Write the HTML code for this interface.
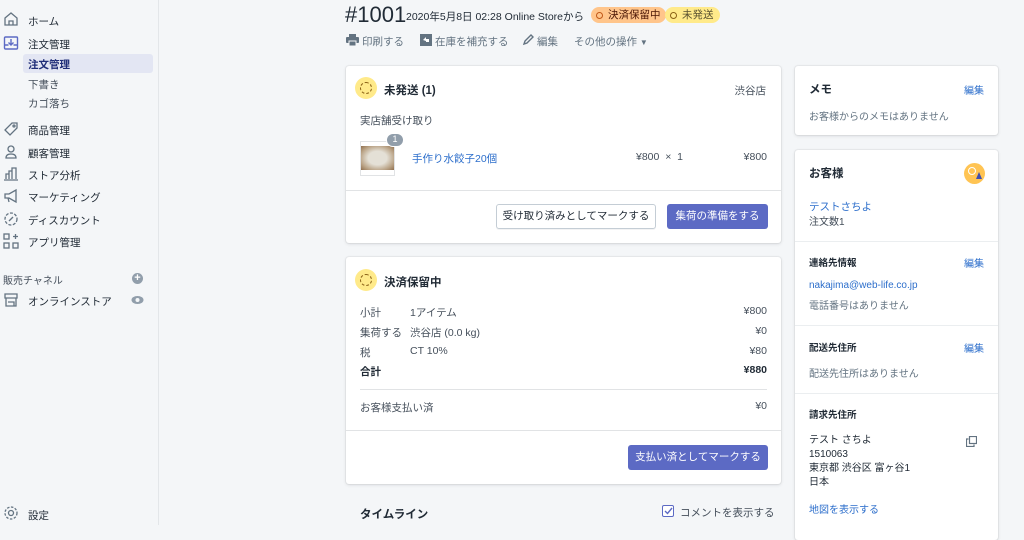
<!DOCTYPE html>
<html><head><meta charset="utf-8"><style>
*{margin:0;padding:0;box-sizing:border-box}
body{width:1024px;height:525px;overflow:hidden;background:#f4f6f8;font-family:"Liberation Sans","Noto Sans CJK JP",sans-serif;color:#212b36;position:relative;font-size:10px}
.a{position:absolute;white-space:nowrap}
.side{position:absolute;left:0;top:0;width:159px;height:525px;background:#f4f6f8;border-right:1px solid #e3e6e9}
.nav{position:absolute;left:28px;font-size:10.5px;color:#212b36}
.ic{position:absolute;left:3px}
.card{position:absolute;background:#fff;border-radius:3px;box-shadow:0 0 0 1px rgba(63,63,68,.05),0 1px 3px rgba(63,63,68,.15)}
.grey{color:#637381}
.blue{color:#2c6ecb}
.btn{position:absolute;border-radius:3px;font-size:10.5px;text-align:center}
.hr{position:absolute;height:1px;background:#e1e3e5}
</style></head><body>
<div class="side">
<svg class="ic" style="top:11px" width="16" height="16" viewBox="0 0 16 16" fill="none" stroke="#637381" stroke-width="1.3"><path d="M2 7L8 2l6 5v7H2z"/><path d="M6 14V10h4v4"/></svg>
<div class="nav" style="top:14px">ホーム</div>
<svg class="ic" style="top:35px" width="16" height="16" viewBox="0 0 16 16" fill="none" stroke="#5c6ac4" stroke-width="1.4"><rect x="1.5" y="2" width="13" height="12" rx="1"/><path d="M8 4v6M5.5 7.5L8 10l2.5-2.5M1.5 10h4M10.5 10h4"/></svg>
<div class="nav" style="top:37px">注文管理</div>
<div class="a" style="left:23px;top:54px;width:130px;height:19px;background:#e3e6f3;border-radius:3px"></div>
<div class="nav" style="top:57px;font-weight:bold;color:#202e78">注文管理</div>
<div class="nav" style="top:77px;color:#454f5b">下書き</div>
<div class="nav" style="top:96px;color:#454f5b">カゴ落ち</div>
<svg class="ic" style="top:121px" width="16" height="16" viewBox="0 0 16 16" fill="none" stroke="#637381" stroke-width="1.3"><path d="M9 2h5v5l-7 7-5-5z"/><circle cx="11" cy="5" r="1"/></svg>
<div class="nav" style="top:123px">商品管理</div>
<svg class="ic" style="top:144px" width="16" height="16" viewBox="0 0 16 16" fill="none" stroke="#637381" stroke-width="1.3"><circle cx="8" cy="5" r="3"/><path d="M3 14c0-3 2-4 5-4s5 1 5 4z"/></svg>
<div class="nav" style="top:146px">顧客管理</div>
<svg class="ic" style="top:166px" width="16" height="16" viewBox="0 0 16 16" fill="none" stroke="#637381" stroke-width="1.3"><path d="M1 14h14M3 13V8h3v5M6 13V5h3v8M9 13V2h4v11"/></svg>
<div class="nav" style="top:168px">ストア分析</div>
<svg class="ic" style="top:188px" width="16" height="16" viewBox="0 0 16 16" fill="none" stroke="#637381" stroke-width="1.3"><path d="M2 6h4l7-4v12l-7-4H2zM5 10l1 4"/></svg>
<div class="nav" style="top:190px">マーケティング</div>
<svg class="ic" style="top:211px" width="16" height="16" viewBox="0 0 16 16" fill="none" stroke="#637381" stroke-width="1.3"><circle cx="8" cy="8" r="6" stroke-dasharray="3 1.5"/><path d="M6 10l4-4"/></svg>
<div class="nav" style="top:213px">ディスカウント</div>
<svg class="ic" style="top:233px" width="16" height="16" viewBox="0 0 16 16" fill="none" stroke="#637381" stroke-width="1.3"><rect x="1" y="1" width="5" height="5"/><rect x="1" y="10" width="5" height="5"/><rect x="10" y="10" width="5" height="5"/><path d="M12.5 1v5M10 3.5h5"/></svg>
<div class="nav" style="top:235px">アプリ管理</div>
<div class="a" style="left:3px;top:272px;font-size:10px;color:#454f5b">販売チャネル</div>
<div class="a" style="left:132px;top:273px;width:11px;height:11px;border-radius:50%;background:#919eab;color:#fff;font-size:11px;line-height:11px;text-align:center;font-weight:bold">+</div>
<svg class="ic" style="top:292px" width="16" height="16" viewBox="0 0 16 16" fill="none" stroke="#637381" stroke-width="1.3"><path d="M2 2h12v4H2zM3 6v8h10V6M5 10h6v4"/></svg>
<div class="nav" style="top:294px">オンラインストア</div>
<svg class="a" style="left:131px;top:295px" width="13" height="10" viewBox="0 0 13 10"><ellipse cx="6.5" cy="5" rx="6" ry="4" fill="#919eab"/><circle cx="6.5" cy="5" r="2" fill="#f4f6f8"/></svg>
<svg class="ic" style="top:505px" width="16" height="16" viewBox="0 0 16 16" fill="none" stroke="#637381" stroke-width="1.3"><circle cx="8" cy="8" r="2.5"/><circle cx="8" cy="8" r="6" stroke-dasharray="2.5 1.5"/></svg>
<div class="nav" style="top:508px">設定</div>
</div>

<div class="a" style="left:345px;top:2px;font-size:22px;color:#212b36">#1001</div>
<div class="a" style="left:406px;top:9px;font-size:10.5px">2020年5月8日 02:28 Online Storeから</div>
<div class="a" style="left:591px;top:7px;height:16px;padding:0 5px 0 17px;background:#ffc58b;border-radius:8px;font-size:10.5px;line-height:16px;color:#4a1504">決済保留中</div>
<div class="a" style="left:596px;top:12px;width:7px;height:7px;border-radius:50%;border:1.5px solid #c05717"></div>
<div class="a" style="left:665px;top:7px;height:16px;padding:0 6px 0 17px;background:#ffea8a;border-radius:8px;font-size:10.5px;line-height:16px;color:#595130">未発送</div>
<div class="a" style="left:670px;top:12px;width:7px;height:7px;border-radius:50%;border:1.5px solid #8a6116"></div>

<svg class="a" style="left:346px;top:34px" width="13" height="12" viewBox="0 0 13 12" fill="#637381"><rect x="3" y="0" width="7" height="3"/><rect x="0" y="3" width="13" height="6" rx="1"/><rect x="3" y="7" width="7" height="5" fill="#637381" stroke="#f4f6f8"/></svg>
<div class="a grey" style="left:362px;top:34px;font-size:10.5px">印刷する</div>
<svg class="a" style="left:420px;top:34px" width="12" height="12" viewBox="0 0 12 12"><rect width="12" height="12" fill="#637381"/><path d="M3 6l3-3v2h3v3H6v-1z" fill="#fff"/></svg>
<div class="a grey" style="left:435px;top:34px;font-size:10.5px">在庫を補充する</div>
<svg class="a" style="left:522px;top:33px" width="13" height="13" viewBox="0 0 13 13" fill="none" stroke="#637381" stroke-width="1.4"><path d="M2 11l1-3 6-6 2 2-6 6z"/></svg>
<div class="a grey" style="left:537px;top:34px;font-size:10.5px">編集</div>
<div class="a grey" style="left:574px;top:34px;font-size:10.5px">その他の操作 <span style="font-size:8px">▼</span></div>

<!-- card 1 -->
<div class="card" style="left:346px;top:66px;width:435px;height:177px">
<div class="a" style="left:9px;top:11px;width:22px;height:22px;border-radius:50%;background:#ffea8a"></div>
<div class="a" style="left:14px;top:16px;width:12px;height:12px;border-radius:50%;border:1.5px dashed #8a6116"></div>
<div class="a" style="left:38px;top:16px;font-size:11.5px;font-weight:bold">未発送 (1)</div>
<div class="a" style="right:15px;top:17px;font-size:10.5px;color:#454f5b">渋谷店</div>
<div class="a" style="left:14px;top:47px;font-size:10.5px;color:#454f5b">実店舗受け取り</div>
<div class="a" style="left:14px;top:75px;width:35px;height:35px;background:#fff;border:1px solid #e1e3e5"></div>
<div class="a" style="left:15px;top:80px;width:33px;height:24px;background:radial-gradient(ellipse,#e4e0d6 40%,#b9a285 75%,#8f6e4e 100%)"></div>
<div class="a" style="left:40px;top:67px;width:18px;height:14px;border-radius:7px;background:#919eab;border:1.5px solid #fff;color:#fff;font-size:9px;line-height:11px;text-align:center">1</div>
<div class="a blue" style="left:66px;top:85px;font-size:10.5px">手作り水餃子20個</div>
<div class="a" style="left:290px;top:85px;font-size:10.5px;color:#454f5b">¥800 &nbsp;× &nbsp;1</div>
<div class="a" style="right:14px;top:85px;font-size:10.5px;color:#454f5b">¥800</div>
<div class="hr" style="left:0;right:0;top:124px"></div>
<div class="btn" style="left:150px;top:138px;width:160px;height:25px;border:1px solid #c4cdd5;line-height:23px;color:#212b36;box-shadow:0 1px 0 rgba(22,29,37,.05)">受け取り済みとしてマークする</div>
<div class="btn" style="left:321px;top:138px;width:101px;height:25px;background:#5c6ac4;color:#fff;line-height:25px">集荷の準備をする</div>
</div>

<!-- card 2 -->
<div class="card" style="left:346px;top:257px;width:435px;height:227px">
<div class="a" style="left:9px;top:12px;width:22px;height:22px;border-radius:50%;background:#ffea8a"></div>
<div class="a" style="left:14px;top:17px;width:12px;height:12px;border-radius:50%;border:1.5px dashed #8a6116"></div>
<div class="a" style="left:38px;top:17px;font-size:11.5px;font-weight:bold">決済保留中</div>
<div class="a" style="left:14px;top:48px;font-size:10.5px;color:#454f5b">小計</div><div class="a" style="left:64px;top:48px;font-size:10.5px;color:#454f5b">1アイテム</div><div class="a" style="right:14px;top:48px;font-size:10.5px;color:#454f5b">¥800</div>
<div class="a" style="left:14px;top:68px;font-size:10.5px;color:#454f5b">集荷する</div><div class="a" style="left:64px;top:68px;font-size:10.5px;color:#454f5b">渋谷店 (0.0 kg)</div><div class="a" style="right:14px;top:68px;font-size:10.5px;color:#454f5b">¥0</div>
<div class="a" style="left:14px;top:88px;font-size:10.5px;color:#454f5b">税</div><div class="a" style="left:64px;top:88px;font-size:10.5px;color:#454f5b">CT 10%</div><div class="a" style="right:14px;top:88px;font-size:10.5px;color:#454f5b">¥80</div>
<div class="a" style="left:14px;top:107px;font-size:10.5px;font-weight:bold">合計</div><div class="a" style="right:14px;top:107px;font-size:10.5px;font-weight:bold">¥880</div>
<div class="hr" style="left:14px;right:14px;top:132px"></div>
<div class="a" style="left:14px;top:143px;font-size:10.5px;color:#454f5b">お客様支払い済</div><div class="a" style="right:14px;top:143px;font-size:10.5px;color:#454f5b">¥0</div>
<div class="hr" style="left:0;right:0;top:173px"></div>
<div class="btn" style="left:282px;top:188px;width:140px;height:25px;background:#5c6ac4;color:#fff;line-height:25px">支払い済としてマークする</div>
</div>

<div class="a" style="left:360px;top:506px;font-size:11.5px;font-weight:bold">タイムライン</div>
<div class="a" style="left:662px;top:505px;width:12px;height:12px;border:1.3px solid #5c6ac4;border-radius:2px;background:#fff"></div>
<svg class="a" style="left:664px;top:507px" width="9" height="8"><path d="M1 4l2.5 2.5L8 1" stroke="#5c6ac4" stroke-width="1.4" fill="none"/></svg>
<div class="a" style="left:680px;top:505px;font-size:10.5px;color:#454f5b">コメントを表示する</div>

<!-- right -->
<div class="card" style="left:795px;top:66px;width:203px;height:69px">
<div class="a" style="left:14px;top:15px;font-size:11.5px;font-weight:bold">メモ</div>
<div class="a blue" style="right:14px;top:16px;font-size:10px">編集</div>
<div class="a grey" style="left:14px;top:42px;font-size:10px">お客様からのメモはありません</div>
</div>
<div class="card" style="left:795px;top:150px;width:203px;height:390px">
<div class="a" style="left:14px;top:15px;font-size:11.5px;font-weight:bold">お客様</div>
<div class="a" style="left:169px;top:13px;width:21px;height:21px;border-radius:50%;background:#ffc453;overflow:hidden"><div style="position:absolute;left:4px;top:4px;width:8px;height:8px;border-radius:50%;border:1.5px solid #fff"></div><div style="position:absolute;left:12px;top:9px;width:0;height:0;border-left:3px solid transparent;border-right:3px solid transparent;border-bottom:7px solid #3f4eae"></div></div>
<div class="a blue" style="left:14px;top:49px;font-size:10.5px">テストさちよ</div>
<div class="a" style="left:14px;top:63px;font-size:10px;color:#454f5b">注文数1</div>
<div class="hr" style="left:0;right:0;top:91px;background:#ebeef0"></div>
<div class="a" style="left:14px;top:105px;font-size:9.5px;font-weight:bold">連絡先情報</div>
<div class="a blue" style="right:14px;top:105px;font-size:10px">編集</div>
<div class="a blue" style="left:14px;top:130px;font-size:10px">nakajima@web-life.co.jp</div>
<div class="a grey" style="left:14px;top:147px;font-size:10px">電話番号はありません</div>
<div class="hr" style="left:0;right:0;top:175px;background:#ebeef0"></div>
<div class="a" style="left:14px;top:190px;font-size:9.5px;font-weight:bold">配送先住所</div>
<div class="a blue" style="right:14px;top:190px;font-size:10px">編集</div>
<div class="a grey" style="left:14px;top:215px;font-size:10px">配送先住所はありません</div>
<div class="hr" style="left:0;right:0;top:243px;background:#ebeef0"></div>
<div class="a" style="left:14px;top:257px;font-size:9.5px;font-weight:bold">請求先住所</div>
<div class="a" style="left:14px;top:284px;font-size:10px;line-height:14px;color:#212b36">テスト さちよ<br>1510063<br>東京都 渋谷区 富ヶ谷1<br>日本</div>
<svg class="a" style="left:171px;top:286px" width="11" height="11" viewBox="0 0 11 11" fill="none" stroke="#637381" stroke-width="1.2"><rect x="3.5" y="0.5" width="7" height="7"/><path d="M2.5 3H0.5v7.5H8V8.5"/></svg>
<div class="a blue" style="left:14px;top:351px;font-size:10px">地図を表示する</div>
</div>
</body></html>
